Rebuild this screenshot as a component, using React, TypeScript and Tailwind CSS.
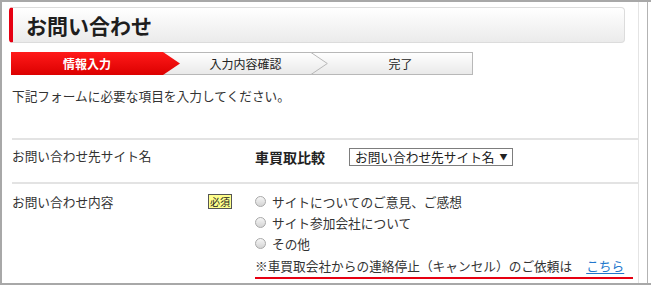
import React from 'react';

const font = { fontFamily: '"Noto Sans CJK JP", "Noto Sans", sans-serif' };

const Radio = ({ label }: { label: string }) => (
    <div className="flex h-[21px] items-center">
        <span className="h-[11px] w-[11px] rounded-full border border-[#a9a9a9] bg-gradient-to-b from-[#f6f6f6] to-[#d4d4d4]" />
        <span className="ml-[6px]">{label}</span>
    </div>
);

const StepBar = () => (
    <div className="-ml-[1px] mt-[9px] flex h-[23px] text-[12px] leading-[23px]">
        {/* step 1 - active */}
        <div className="relative z-20 w-[169px] shrink-0">
            <svg width="169" height="23" className="absolute inset-0">
                <defs>
                    <linearGradient id="st1" x1="0" y1="0" x2="0" y2="1">
                        <stop offset="0" stopColor="#ff1a1a" />
                        <stop offset="1" stopColor="#dc0000" />
                    </linearGradient>
                </defs>
                <polygon points="0,0 152,0 169,11.5 152,23 0,23" fill="url(#st1)" />
            </svg>
            <div className="relative w-[152px] text-center font-bold text-white">情報入力</div>
        </div>
        {/* step 2 */}
        <div className="relative z-10 -ml-[17px] w-[165px] shrink-0">
            <svg width="165" height="23" className="absolute inset-0">
                <defs>
                    <linearGradient id="st2" x1="0" y1="0" x2="0" y2="1">
                        <stop offset="0" stopColor="#ffffff" />
                        <stop offset="1" stopColor="#e9e9e9" />
                    </linearGradient>
                </defs>
                <polygon points="0,0.5 148,0.5 164.3,11.5 148,22.5 0,22.5" fill="url(#st2)" stroke="#b8b8b8" />
            </svg>
            <div className="relative w-[148px] pl-[17px] text-center text-[#222]">入力内容確認</div>
        </div>
        {/* step 3 */}
        <div className="relative -ml-[17px] w-[162px] shrink-0">
            <svg width="162" height="23" className="absolute inset-0">
                <defs>
                    <linearGradient id="st3" x1="0" y1="0" x2="0" y2="1">
                        <stop offset="0" stopColor="#ffffff" />
                        <stop offset="1" stopColor="#e9e9e9" />
                    </linearGradient>
                </defs>
                <rect x="0.5" y="0.5" width="161" height="22" fill="url(#st3)" stroke="#b8b8b8" />
            </svg>
            <div className="relative pl-[17px] text-center text-[#222]">完了</div>
        </div>
    </div>
);

export default function App() {
    return (
        <div className="flex h-[285px] w-[651px] overflow-hidden border-2 border-r-0 border-[#a8a8a8] bg-white text-[12.7px] text-[#333]" style={font}>
            {/* main content */}
            <div className="w-[636px] shrink-0 pl-[10px] pt-[5px]">
                {/* Title */}
                <div className="-ml-[3px] flex h-[36px] w-[616px] items-center rounded-[4px] border border-l-[4px] border-[#dcdcdc] border-l-[#e60012] bg-gradient-to-b from-white to-[#ebebeb] pl-[13px]">
                    <h1 className="text-[21px] font-bold leading-none text-[#1e1e1e]">お問い合わせ</h1>
                </div>

                <StepBar />

                <p className="mt-[11px] leading-[20px]">下記フォームに必要な項目を入力してください。</p>

                <div className="mt-[32px] h-[2px] bg-[#e3e3e3]" />

                {/* row 1 */}
                <div className="flex h-[42px] items-start pt-[6px]">
                    <div className="w-[243px] shrink-0 leading-[20px]">お問い合わせ先サイト名</div>
                    <div className="flex h-[22px] items-center">
                        <span className="text-[14px] font-bold text-[#222]">車買取比較</span>
                        <div className="ml-[24px] flex h-[18px] w-[164px] items-center whitespace-nowrap border border-[#7d7d7d] bg-white pl-[5px] leading-none text-[#222]">
                            <span>お問い合わせ先サイト名</span>
                            <span className="ml-[5px] text-[8px]">▼</span>
                        </div>
                    </div>
                </div>

                <div className="h-[2px] bg-[#e3e3e3]" />

                {/* row 2 */}
                <div className="flex items-start pt-[7px]">
                    <div className="flex h-[21px] w-[243px] shrink-0 items-center">
                        <span>お問い合わせ内容</span>
                        <span className="ml-auto mr-[23px] flex h-[15px] w-[24px] items-center justify-center border border-[#555] bg-[#ffff8c] text-[10px] leading-none text-[#222]">必須</span>
                    </div>
                    <div>
                        <Radio label="サイトについてのご意見、ご感想" />
                        <Radio label="サイト参加会社について" />
                        <Radio label="その他" />
                        <div className="flex h-[23px] items-center whitespace-nowrap">
                            <span>※車買取会社からの連絡停止（キャンセル）のご依頼は</span>
                            <a href="#" className="ml-[14px] text-[#2277cc] underline underline-offset-2">こちら</a>
                        </div>
                        <div className="h-[2px] w-[378px] bg-[#e60012]" />
                    </div>
                </div>
            </div>

            {/* right gutter */}
            <div className="flex w-[13px] shrink-0 border-l border-[#e4e4e4]">
                <div className="ml-[8px] h-full w-px bg-[#b3b3b3]" />
            </div>
        </div>
    );
}
